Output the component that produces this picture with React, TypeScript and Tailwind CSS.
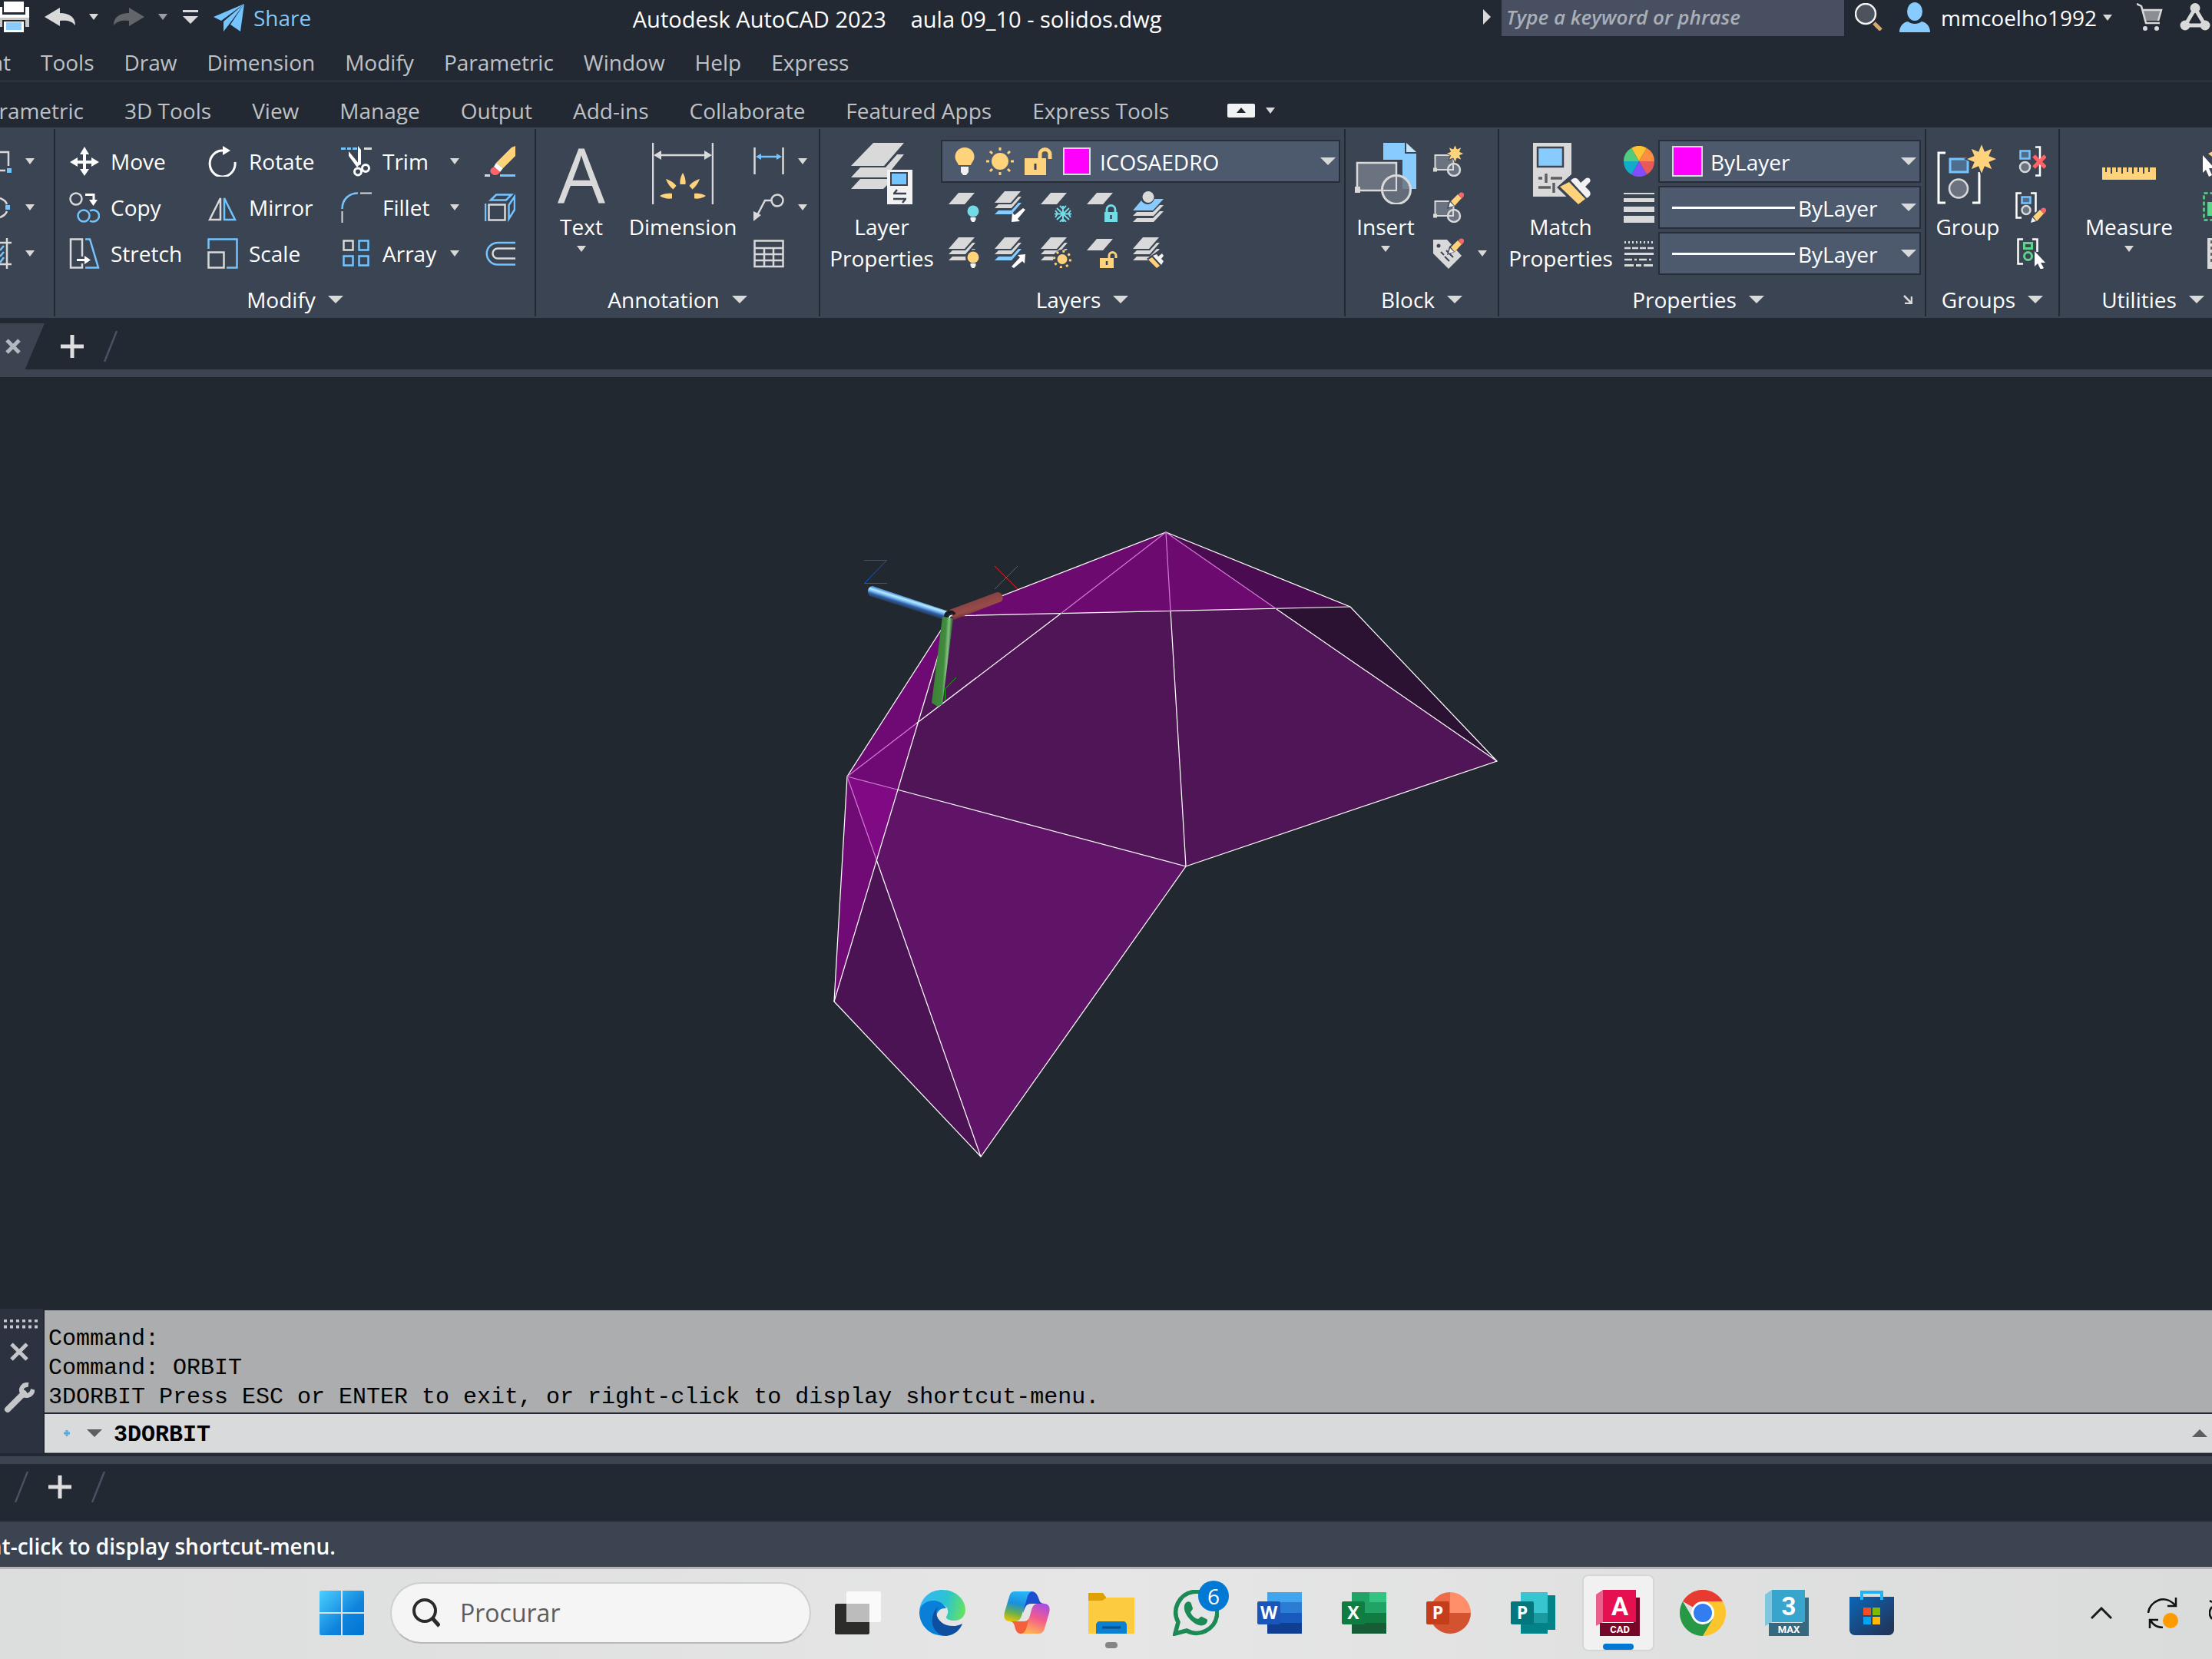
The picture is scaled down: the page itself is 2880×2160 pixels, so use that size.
import type { ReactNode } from "react";

const GRAY = "#d9d9d9";
const BLUE = "#74c5ff";
const YELLOW = "#ffd27c";
const CYAN = "#74dbe6";
const GREEN = "#5fd38a";

const menuItems = ["Tools", "Draw", "Dimension", "Modify", "Parametric", "Window", "Help", "Express"];

const ribbonTabs = [
   "3D Tools",
   "View",
   "Manage",
   "Output",
   "Add-ins",
   "Collaborate",
   "Featured Apps",
   "Express Tools",
];

interface CaretProps {
   big?: boolean;
   up?: boolean;
   color?: string;
}

function Caret({ big, up, color = GRAY }: CaretProps) {
   return (
      <svg
         className={big ? "w-5 h-2.5 shrink-0 pointer-events-none" : "w-3 h-2 shrink-0 pointer-events-none"}
         viewBox="0 0 20 10"
         preserveAspectRatio="none"
         aria-hidden="true"
      >
         <path d={up ? "M0 10L10 0L20 10Z" : "M0 0H20L10 10Z"} fill={color} />
      </svg>
   );
}

function Icon({ children }: { children: ReactNode }) {
   return (
      <svg className="w-10 h-10 shrink-0" viewBox="0 0 40 40" fill="none" aria-hidden="true">
         {children}
      </svg>
   );
}

function BigIcon({ children }: { children: ReactNode }) {
   return (
      <svg className="w-20 h-20 shrink-0" viewBox="0 0 80 80" fill="none" aria-hidden="true">
         {children}
      </svg>
   );
}

/* ---------- Modify icons ---------- */

const MoveIcon = () => (
   <Icon>
      <path d="M20 1l6 10h-4v8h7v-4l10 6-10 6v-4h-7v7h4l-6 9-6-9h4v-7h-7v4L1 21l10-6v4h7v-8h-4z" fill="#fff" />
   </Icon>
);

const RotateIcon = () => (
   <Icon>
      <path d="M36 21A16.500 17 0 1 1 20 6" stroke="#fff" strokeWidth="3" />
      <path d="M20 0l10 6-10 6z" fill="#fff" />
   </Icon>
);

const TrimIcon = () => (
   <Icon>
      <path d="M0 3.500h6M8 3.500h5M15 3.500h6" stroke={BLUE} strokeWidth="3" />
      <path d="M30 3.500h10" stroke={GRAY} strokeWidth="3" />
      <path d="M22 0l4 5v19l-4 2zM10 7l14 17-3 4L10 13z" fill="#fff" />
      <circle cx="22" cy="33.500" r="4.500" stroke="#fff" strokeWidth="3" />
      <circle cx="32" cy="29" r="4.500" stroke="#fff" strokeWidth="3" />
   </Icon>
);

const EraseIcon = () => (
   <Icon>
      <path d="M40 0v13L24 29l-9-7L35 2z" fill={YELLOW} />
      <path d="M15 22l9 7-4 5-8-7z" fill="#fff" />
      <path d="M12 27l8 7c-3 5-8 5-11 2s-2-6 3-9z" fill="#ff6468" />
      <path d="M0 38.500h7" stroke={GRAY} strokeWidth="3" />
      <path d="M20 38.500h20" stroke={BLUE} strokeWidth="3" />
   </Icon>
);

const CopyIcon = () => (
   <Icon>
      <circle cx="9" cy="9" r="7.500" stroke={GRAY} strokeWidth="2.500" />
      <path d="M21 3.500h11v9" stroke="#fff" strokeWidth="3" />
      <path d="M26 10h11l-5.500 8z" fill="#fff" />
      <circle cx="19" cy="31" r="7.500" stroke={BLUE} strokeWidth="2.500" />
      <path d="M27 24.500c6-3 12 1 12 6.500s-6 9.500-12 6.500" stroke={BLUE} strokeWidth="2.500" />
   </Icon>
);

const MirrorIcon = () => (
   <Icon>
      <path d="M17 8v28H3z" stroke={GRAY} strokeWidth="2.500" />
      <path d="M22 8v28h14z" stroke={BLUE} strokeWidth="2.500" />
   </Icon>
);

const FilletIcon = () => (
   <Icon>
      <path d="M1.500 22C1.500 10 10 1.500 22 1.500" stroke={BLUE} strokeWidth="2.500" />
      <path d="M25 1.500h15M1.500 25v15" stroke={GRAY} strokeWidth="2" />
   </Icon>
);

const ExplodeIcon = () => (
   <Icon>
      <path d="M5.500 16.500h21v20h-21z" stroke={GRAY} strokeWidth="2.500" />
      <path d="M1 15v23M8 10.500l7-7h20l-7 7zM31.500 17L39 6v17l-7.500 12z" stroke={BLUE} strokeWidth="2.500" />
   </Icon>
);

const StretchIcon = () => (
   <Icon>
      <path d="M17 24V1.500H2v37h15V33" stroke={GRAY} strokeWidth="2.500" />
      <path d="M21 1.500h6l11 37H21" stroke={BLUE} strokeWidth="2.500" />
      <path d="M10 27h10v-4l8 5.500-8 5.500v-4H10z" fill="#fff" />
   </Icon>
);

const ScaleIcon = () => (
   <Icon>
      <path d="M1.500 14V1.500h37v37H25" stroke={BLUE} strokeWidth="2.500" />
      <path d="M1.500 18.500h20v20h-20z" stroke={GRAY} strokeWidth="2.500" />
   </Icon>
);

const ArrayIcon = () => (
   <Icon>
      <path d="M3.500 3.500h12v12h-12z" stroke={GRAY} strokeWidth="2.500" />
      <path d="M23.500 3.500h12v12h-12zM3.500 23.500h12v12h-12zM23.500 23.500h12v12h-12z" stroke={BLUE} strokeWidth="2.500" />
   </Icon>
);

const OffsetIcon = () => (
   <Icon>
      <path d="M40 6H17a14 14 0 0 0 0 28.500h23" stroke={BLUE} strokeWidth="2.500" />
      <path d="M40 13.500H17a6.500 6.500 0 0 0 0 13h23" stroke={GRAY} strokeWidth="2.500" />
   </Icon>
);

/* ---------- Annotation icons ---------- */

const DimensionIcon = () => (
   <BigIcon>
      <path d="M1 0v80M79 0v80M8 16h64" stroke={GRAY} strokeWidth="2.500" />
      <path d="M2 16l10-6v12zM78 16l-10-6v12z" fill={GRAY} />
      <path
         d="M40 39c3 5 4 10 3.500 15h-7c-.5-5 .5-10 3.500-15zM18 47c6 2 11 5 13.500 9l-4 4.500c-4-3-7-7-9.500-13.500zM62 47c-6 2-11 5-13.500 9l4 4.500c4-3 7-7 9.500-13.500zM10 69c5-3 10-3.500 16-3v6.500c-6 .5-11 0-16-3.500zM70 69c-5-3-10-3.500-15-3v6.500c5 .5 10 0 15-3.500z"
         fill={YELLOW}
      />
   </BigIcon>
);

const LinearIcon = () => (
   <Icon>
      <path d="M1.500 2v35M38.500 2v35" stroke={GRAY} strokeWidth="2.500" />
      <path d="M6 14h28" stroke={BLUE} strokeWidth="2.500" />
      <path d="M3 14l7-4v8zM37 14l-7-4v8z" fill={BLUE} />
   </Icon>
);

const LeaderIcon = () => (
   <Icon>
      <circle cx="31" cy="11" r="7.500" stroke={GRAY} strokeWidth="2.500" />
      <path d="M23 11h-8L5 30" stroke={GRAY} strokeWidth="2.500" />
      <path d="M0 25l10 5L0 38z" fill={GRAY} />
   </Icon>
);

const TableIcon = () => (
   <Icon>
      <path
         d="M1.500 3.500h37v33.500h-37zM1.500 13h37M1.500 21h37M1.500 29h37M14 13v24M26 13v24"
         stroke={GRAY}
         strokeWidth="2.500"
      />
   </Icon>
);

/* ---------- Layer icons ---------- */

const LayerPropertiesIcon = () => (
   <BigIcon>
      <path d="M29 0h40L43 30H0zM12 32h33L60 15h9L47 42v3H0zM12 47h35v8l-5 5H0z" fill={GRAY} />
      <path d="M47 35h33v45H47z" fill="#f2f2f2" />
      <path d="M52 39h21v16H52z" fill={BLUE} stroke="#3b4453" strokeWidth="2" />
      <path d="M55 66h17M55 73h17M60 61l-4 5M67 78l4-5" stroke="#3b4453" strokeWidth="2.500" />
   </BigIcon>
);

const Sheet = () => <path d="M13 2h21L21 17H0z" fill={GRAY} />;

const Sheets = ({ lowBlue }: { lowBlue?: boolean }) => (
   <>
      <path d="M13 0h21L21 15H0zM5 17h17l9-10h4L22 22H0z" fill={GRAY} />
      <path d="M5 25h17l9-10h4L22 30H0z" fill={lowBlue ? "#88ccff" : GRAY} />
   </>
);

const SmallBulb = ({ color }: { color: string }) => (
   <>
      <circle cx="32" cy="26" r="10" fill="#3b4453" />
      <circle cx="32" cy="26" r="7.500" fill={color} />
      <path d="M28.500 34h7v3l-2 3h-3l-2-3z" fill="#f2f2f2" />
   </>
);

const Padlock = ({ color, open }: { color: string; open?: boolean }) => (
   <>
      <path d={open ? "M17 27h18v13H17z" : "M23 27h17v13H23z"} fill={color} />
      <path
         d={open ? "M29 28v-4a4.500 4.500 0 0 1 9 0v3" : "M26 28v-4a5.500 5.500 0 0 1 11 0v4"}
         stroke={color}
         strokeWidth="3"
      />
      <path d={open ? "M26 31v5" : "M31.500 31v5"} stroke="#3b4453" strokeWidth="2.500" />
   </>
);

const layerTools: { label: string; icon: ReactNode }[][] = [
   [
      { label: "Off", icon: <><Sheet /><SmallBulb color={CYAN} /></> },
      {
         label: "Isolate",
         icon: <><Sheets lowBlue /><path d="M37 22l3 2-10 12 3 3-11 1 1-12 3 3z" fill="#fff" /></>,
      },
      {
         label: "Freeze",
         icon: (
            <>
               <Sheet />
               <path
                  d="M29 19v21M18 29.500h22M21 22l16 15M37 22L21 37M25 19l4 4 4-4M25 40l4-4 4 4M19 25l3 4-3 5M39 25l-3 4 3 5"
                  stroke={CYAN}
                  strokeWidth="2"
               />
            </>
         ),
      },
      { label: "Lock", icon: <><Sheet /><Padlock color={CYAN} /></> },
      {
         label: "Make current",
         icon: (
            <>
               <path d="M11 12c4 7 14 7 17-2h12L26 25H0z" fill="#88ccff" />
               <circle cx="20" cy="7.500" r="7.500" fill={GRAY} />
               <path d="M5 27h21l9-9h5L27 32H0zM5 35h21l9-9h5L27 40H0z" fill={GRAY} />
            </>
         ),
      },
   ],
   [
      { label: "Turn all on", icon: <><Sheets /><SmallBulb color={YELLOW} /></> },
      {
         label: "Unisolate",
         icon: <><Sheets lowBlue /><path d="M22 38l11-12-3-3 10-1-1 12-3-3-11 9z" fill="#fff" /></>,
      },
      {
         label: "Thaw",
         icon: (
            <>
               <Sheets />
               <circle cx="28" cy="28" r="12" fill="#3b4453" />
               <circle cx="28" cy="28.500" r="6.500" fill={YELLOW} />
               <circle cx="28" cy="28.500" r="10.500" stroke={YELLOW} strokeWidth="3" strokeDasharray="3 5.250" />
            </>
         ),
      },
      { label: "Unlock", icon: <><Sheet /><Padlock color={YELLOW} open /></> },
      {
         label: "Match layer",
         icon: (
            <>
               <Sheets />
               <path d="M18 28l14-10 8 10v12H30z" fill="#3b4453" />
               <path d="M20 29l5-3 10 11-4 3z" fill={YELLOW} />
               <path d="M26 24l5-2 2 3 5-4 2 3-3 4 3 3-3 5z" fill="#f2f2f2" />
            </>
         ),
      },
   ],
];

const BulbIcon = () => (
   <svg className="w-7 h-9 shrink-0" viewBox="0 0 28 36" aria-hidden="true">
      <path d="M14 0c7 0 12.500 5 12.500 12 0 5-3 7-4.500 11H6c-1.500-4-4.500-6-4.500-11C1.500 5 7 0 14 0z" fill={YELLOW} />
      <path d="M9 25h10v7l-3 4h-4l-3-4z" fill="#f2f2f2" />
   </svg>
);

const SunIcon = () => (
   <svg className="w-9 h-9 shrink-0" viewBox="0 0 36 36" aria-hidden="true">
      <circle cx="18" cy="18" r="11" fill={YELLOW} />
      <path
         d="M18 0v4M18 32v4M0 18h4M32 18h4M5 5l3 3M28 28l3 3M5 31l3-3M28 8l3-3"
         stroke={YELLOW}
         strokeWidth="3"
      />
   </svg>
);

const UnlockIcon = () => (
   <svg className="w-9 h-9 shrink-0" viewBox="0 0 36 36" fill="none" aria-hidden="true">
      <path d="M0 14h28v22H0z" fill={YELLOW} />
      <path d="M20 15V9a6.500 6.500 0 0 1 13 0v6" stroke={YELLOW} strokeWidth="5" />
      <path d="M14 21v8" stroke="#3b4453" strokeWidth="3" />
   </svg>
);

/* ---------- Block icons ---------- */

const STAR = "M0-12l2.500 6 6-2.500-2.500 6 6 2.500-6 2.500 2.500 6-6-2.500L0 12l-2.500-6-6 2.500 2.500-6-6-2.500 6-2.500-2.500-6 6 2.500z";

const InsertIcon = () => (
   <BigIcon>
      <path d="M37 0h28v14h15v46H62V22H37z" fill="#88ccff" />
      <path d="M67 0l13 12H67z" fill="#c4e4fb" />
      <path d="M3 26h51v36H3z" fill="#6b7380" stroke={GRAY} strokeWidth="2.500" />
      <circle cx="54" cy="61" r="18.500" fill="#6b7380" fillOpacity=".85" stroke={GRAY} strokeWidth="3" />
      <path d="M54 43v19H36" stroke={GRAY} strokeWidth="2" />
      <path d="M0 57h7v8H0z" fill={GRAY} />
   </BigIcon>
);

const BlockShape = () => (
   <>
      <path d="M2.500 12h24v19h-24z" fill="#6b7380" stroke={GRAY} strokeWidth="2" />
      <circle cx="27" cy="31" r="8" fill="#6b7380" stroke={GRAY} strokeWidth="2.500" />
      <path d="M26 22v9h-8" stroke={GRAY} strokeWidth="2" />
      <path d="M0 28.500h5v5H0z" fill={GRAY} />
   </>
);

const Pencil = () => (
   <>
      <path d="M18 22l3-11L34 0l6 6-12 12z" fill="#3b4453" />
      <path d="M20 20l2-7 5 5z" fill="#f2f2f2" />
      <path d="M23 12l9-9 5 5-9 10z" fill={YELLOW} />
      <path d="M33 3c2-4 8-3 7 2l-3 4z" fill="#ff6468" />
   </>
);

const CreateBlockIcon = () => (
   <Icon>
      <BlockShape />
      <path d={STAR} transform="translate(28.500 10)" fill={YELLOW} stroke="#3b4453" strokeWidth="1" />
   </Icon>
);

const EditBlockIcon = () => (
   <Icon>
      <BlockShape />
      <Pencil />
   </Icon>
);

const EditAttributeIcon = () => (
   <Icon>
      <path d="M0 2h18l19 21-17 17L0 20z" fill={GRAY} />
      <circle cx="7" cy="10" r="2.500" fill="#3b4453" />
      <path d="M10 18l4 4M15 24l6 6M17 16l9 9" stroke="#3b4453" strokeWidth="2" />
      <Pencil />
   </Icon>
);

/* ---------- Properties icons ---------- */

const MatchIcon = () => (
   <BigIcon>
      <path d="M4 0h50v70H4z" fill={GRAY} />
      <path d="M10 6h33v25H10z" fill="#88ccff" stroke="#3b4453" strokeWidth="2.500" />
      <path d="M11 46h5M27 46h15M21 40v12M11 58h16M31 52v13" stroke="#5c5f64" strokeWidth="3.500" />
      <path d="M35 58l19-17 28 16-20 27z" fill="#3b4453" />
      <path d="M39 57l12-6 21 22-9 7z" fill={YELLOW} />
      <path d="M53 49c4-4 7-4 10-1l3 4 7-6c4-2 7 2 5 5l-6 6 5 5c3 4 2 7-3 10z" fill="#f2f2f2" />
   </BigIcon>
);

const ColorWheelIcon = () => (
   <Icon>
      <path d="M20 20L10 2.700a20 20 0 0 1 20 0z" fill="#ffc233" />
      <path d="M20 20L30 2.700A20 20 0 0 1 40 20z" fill="#ff8f40" />
      <path d="M20 20h20a20 20 0 0 1-10 17.300z" fill="#e85a5a" />
      <path d="M20 20l10 17.300a20 20 0 0 1-20 0z" fill="#834dff" />
      <path d="M20 20L10 37.300A20 20 0 0 1 0 20z" fill="#12accb" />
      <path d="M20 20H0A20 20 0 0 1 10 2.700z" fill="#4fcc80" />
   </Icon>
);

const LineweightIcon = () => (
   <Icon>
      <path d="M0 1h40v2H0zM0 8h40v5H0zM0 19h40v7H0zM0 31h40v9H0z" fill={GRAY} />
   </Icon>
);

const LinetypeIcon = () => (
   <Icon>
      <path d="M1 5.500h38" stroke={GRAY} strokeWidth="3" strokeDasharray="2 3" />
      <path d="M1 13h38" stroke={GRAY} strokeWidth="2.500" strokeDasharray="8 2" />
      <path d="M1 20.500h38" stroke={GRAY} strokeWidth="3" />
      <path d="M1 28h38" stroke={GRAY} strokeWidth="2.500" strokeDasharray="10 3 3 3" />
      <path d="M1 35.500h38" stroke={GRAY} strokeWidth="3" strokeDasharray="12 3 7 3" />
   </Icon>
);

/* ---------- Groups and Utilities icons ---------- */

const GroupIcon = () => (
   <BigIcon>
      <path d="M11 13H2v65h9M46 78h9V38" stroke="#fff" strokeWidth="3" />
      <path d="M17 21h23v17H17z" fill="#4f6d8c" stroke={BLUE} strokeWidth="3" />
      <circle cx="28" cy="59.500" r="12" fill="#6b7380" stroke={GRAY} strokeWidth="2.500" />
      <path d={STAR} transform="translate(58 21) scale(1.750)" fill={YELLOW} stroke="#3b4453" strokeWidth="1" />
   </BigIcon>
);

const UngroupIcon = () => (
   <Icon>
      <path d="M26 1.500h6v37h-6" stroke="#fff" strokeWidth="2.500" />
      <path d="M6.500 6.500h12v10h-12z" fill="#4f6d8c" stroke={BLUE} strokeWidth="2.500" />
      <circle cx="12.500" cy="27.500" r="6.500" fill="#6b7380" stroke={GRAY} strokeWidth="2.500" />
      <path d="M24 13l15 15M39 13L24 28" stroke="#ff6468" strokeWidth="5" />
   </Icon>
);

const GroupEditIcon = () => (
   <Icon>
      <path d="M8 1.500H1.500v32H8M20 1.500h6.500v25" stroke="#fff" strokeWidth="2.500" />
      <path d="M8.500 6.500h11v8h-11z" fill="#4f6d8c" stroke={BLUE} strokeWidth="2.500" />
      <circle cx="14" cy="23.500" r="5.500" fill="#6b7380" stroke={GRAY} strokeWidth="2.500" />
      <g transform="translate(0 20)">
         <Pencil />
      </g>
   </Icon>
);

const GroupSelectIcon = () => (
   <Icon>
      <path d="M10 1.500H3.500v32H10M22 1.500h6.500V18" stroke="#fff" strokeWidth="2.500" />
      <path d="M11.500 6.500h10v7h-10z" stroke={GREEN} strokeWidth="3" />
      <circle cx="16.500" cy="23.500" r="5" stroke={GREEN} strokeWidth="3" />
      <path d="M25 17l14 15h-6l4 7-4 2-4-8-4 4z" fill="#fff" />
   </Icon>
);

const RulerIcon = () => (
   <BigIcon>
      <path
         d="M5 32h4v6h2v-6h5v8h2v-8h5v6h2v-6h5v8h2v-8h5v6h2v-6h5v8h2v-8h5v6h2v-6h5v8h2v-8h5v6h2v-6h8v16H5z"
         fill={YELLOW}
      />
   </BigIcon>
);

/* ---------- Ribbon building blocks ---------- */

interface PanelProps {
   title: string;
   className: string;
   launcher?: boolean;
   children: ReactNode;
}

function Panel({ title, className, launcher, children }: PanelProps) {
   return (
      <section className={`flex flex-col shrink-0 my-0.5 border-l-2 border-[#222933] ${className}`}>
         <div className="flex h-[200px] items-start">{children}</div>
         <div className="flex items-center h-11">
            <button type="button" className="flex flex-1 justify-center items-center gap-4">
               {title}
               <Caret big />
            </button>
            {launcher && (
               <button type="button" className="pr-4 pl-2" aria-label={`${title} settings`}>
                  <svg className="w-3 h-3" viewBox="0 0 12 12" fill="none" aria-hidden="true">
                     <path d="M1 1l9 9M11 2v9H2" stroke={GRAY} strokeWidth="2.500" />
                  </svg>
               </button>
            )}
         </div>
      </section>
   );
}

interface BigButtonProps {
   icon: ReactNode;
   lines: string[];
   className: string;
   caret?: boolean;
}

function BigButton({ icon, lines, className, caret }: BigButtonProps) {
   return (
      <button type="button" className={`flex flex-col shrink-0 items-center pt-[18px] ${className}`}>
         {icon}
         <span className="mt-[9px] leading-[41px]">
            {lines.map((line) => (
               <span key={line} className="block">
                  {line}
               </span>
            ))}
         </span>
         {caret && (
            <span className="flex pt-1">
               <Caret />
            </span>
         )}
      </button>
   );
}

interface ToolProps {
   icon: ReactNode;
   label: string;
   hideLabel?: boolean;
   caret?: boolean;
}

function Tool({ icon, label, hideLabel, caret }: ToolProps) {
   return (
      <div className="flex items-center h-[60px]">
         <button type="button" className="flex items-center gap-3.5" aria-label={label}>
            {icon}
            {!hideLabel && label}
         </button>
         {caret && (
            <button type="button" className="ml-auto p-1" aria-label={`${label} options`}>
               <Caret />
            </button>
         )}
      </div>
   );
}

interface ComboProps {
   label: string;
   value: string;
   className: string;
   children?: ReactNode;
}

function Combo({ label, value, className, children }: ComboProps) {
   return (
      <div className={`flex items-center h-14 border-2 border-[#272e39] bg-[#4d596d] pr-1 ${className}`}>
         {children}
         <select
            aria-label={label}
            defaultValue={value}
            className="flex-1 pt-0.5 min-w-0 h-full bg-transparent outline-none appearance-none"
         >
            <option>{value}</option>
         </select>
         <Caret big />
      </div>
   );
}

function Swatch({ className }: { className: string }) {
   return <span className={`shrink-0 border-2 border-[#d9d9d9] bg-[#ff00ff] ${className}`} />;
}

function TitleBar() {
   return (
      <header className="flex items-start h-14 overflow-hidden text-white">
         <div className="flex items-center h-11 shrink-0">
            <button type="button" aria-label="Plot">
               <svg className="w-[38px] h-10" viewBox="0 0 38 40" aria-hidden="true">
                  <path d="M5 0h26v14H5z" fill="#fff" />
                  <path d="M0 7h3v10h30V7h5v14H0z" fill="#fff" />
                  <path d="M0 21h38v12h-5v-9H3v9H0z" fill="#c9c9c9" />
                  <path d="M5 26h26v14H5z" fill="#fff" />
                  <path d="M8 27h20v10H8z" fill="#88ccff" />
               </svg>
            </button>
            <button type="button" className="ml-5" aria-label="Undo">
               <svg className="w-10 h-6" viewBox="0 0 40 24" aria-hidden="true">
                  <path d="M0 12L20 0v7c12 0 20 5 20 16-5-6-11-7-20-6v7z" fill={GRAY} />
               </svg>
            </button>
            <button type="button" className="ml-[18px]" aria-label="Undo history">
               <Caret />
            </button>
            <button type="button" className="ml-5" aria-label="Redo">
               <svg className="w-10 h-6" viewBox="0 0 40 24" aria-hidden="true">
                  <path d="M40 12L20 0v7C8 7 0 12 0 23c5-6 11-7 20-6v7z" fill="#62666b" />
               </svg>
            </button>
            <button type="button" className="ml-[18px]" aria-label="Redo history">
               <Caret color="#9a9da1" />
            </button>
            <button type="button" className="ml-5" aria-label="Customize toolbar">
               <svg className="w-5 h-[18px]" viewBox="0 0 20 18" aria-hidden="true">
                  <path d="M0 0h20v3H0zM0 8h20L10 18z" fill={GRAY} />
               </svg>
            </button>
         </div>
         <button type="button" className="flex items-center gap-3 ml-5 h-[46px] text-[#7fc8fb] shrink-0">
            <svg className="w-10 h-9" viewBox="0 0 40 36" aria-hidden="true">
               <path d="M40 0L0 17l10 5zM40 0L13 23v13l7-9zM40 0L22 27l13 9z" fill={BLUE} />
            </svg>
            <span className="leading-[48px]">Share</span>
         </button>
         <h1 className="flex flex-1 justify-center gap-8 text-[29px] leading-[50px] whitespace-nowrap">
            <span>Autodesk AutoCAD 2023</span>
            <span>aula 09_10 - solidos.dwg</span>
         </h1>
         <div className="flex items-start shrink-0">
            <svg className="mt-3 mr-3.5 w-2.5 h-5" viewBox="0 0 10 20" aria-hidden="true">
               <path d="M0 0l10 10L0 20z" fill={GRAY} />
            </svg>
            <input
               type="text"
               aria-label="Search help"
               placeholder="Type a keyword or phrase"
               className="bg-[#474f61] px-1.5 pb-1 w-[446px] h-[47px] font-semibold text-[26px] placeholder:text-[#a9aeb7] italic outline-none"
            />
            <button type="button" className="mt-1 ml-3.5" aria-label="Search">
               <svg className="w-9 h-9" viewBox="0 0 36 36" aria-hidden="true">
                  <path d="M25 26l9 9" stroke="#d8a768" strokeWidth="5" />
                  <circle cx="14" cy="14" r="13" fill="#4c535c" stroke="#f2f2f2" strokeWidth="2.500" />
               </svg>
            </button>
            <button type="button" className="flex items-center gap-3.5 ml-[22px] h-[46px]">
               <svg className="w-10 h-10" viewBox="0 0 40 40" aria-hidden="true">
                  <ellipse cx="20" cy="12" rx="10" ry="12" fill="#88ccff" />
                  <path d="M0 39c0-9 6-13 11-14 5 4 13 4 18 0 5 1 11 5 11 14z" fill="#88ccff" />
               </svg>
               <span className="leading-[48px]">mmcoelho1992</span>
               <span className="-ml-1.5">
                  <Caret />
               </span>
            </button>
            <button type="button" className="mt-1 ml-8" aria-label="App store">
               <svg className="w-[34px] h-9" viewBox="0 0 34 36" fill="none" aria-hidden="true">
                  <path d="M8 9h24l-4 14H12z" fill="#8b8f94" />
                  <path d="M0 1l6 3 6 22h18M8 9h24l-4 14" stroke={GRAY} strokeWidth="2.500" />
                  <circle cx="11" cy="33" r="3" fill={GRAY} />
                  <circle cx="26" cy="33" r="3" fill={GRAY} />
               </svg>
            </button>
            <button type="button" className="mt-1 mr-0.5 ml-[22px]" aria-label="Autodesk App">
               <svg className="w-10 h-9" viewBox="0 0 40 36" fill="none" aria-hidden="true">
                  <path d="M20 7L7 29h26z" stroke={GRAY} strokeWidth="5" />
                  <circle cx="20" cy="6.500" r="6.500" fill={GRAY} />
                  <circle cx="7" cy="29" r="6.500" fill={GRAY} />
                  <circle cx="33" cy="29" r="6.500" fill={GRAY} />
               </svg>
            </button>
         </div>
      </header>
   );
}

function Ribbon() {
   return (
      <div className="flex bg-[#3b4453] h-[248px] overflow-hidden text-white whitespace-nowrap">
         <section className="shrink-0 pt-3.5 pr-[21px] w-[70px]">
            <Tool
               hideLabel
               caret
               label="Rectangle"
               icon={
                  <svg className="w-4 h-10" viewBox="0 0 16 40" aria-hidden="true">
                     <path d="M0 8h11v18M0 32h7" stroke={GRAY} strokeWidth="2.500" fill="none" />
                     <path d="M9 29h6v6H9z" fill={BLUE} />
                  </svg>
               }
            />
            <Tool
               hideLabel
               caret
               label="Ellipse"
               icon={
                  <svg className="w-4 h-10" viewBox="0 0 16 40" aria-hidden="true">
                     <path d="M0 8c5 2 8 5 9 8M9 25c-1 3-4 6-9 8" stroke={GRAY} strokeWidth="2.500" fill="none" />
                     <path d="M7 17h6v6H7z" fill={BLUE} />
                  </svg>
               }
            />
            <Tool
               hideLabel
               caret
               label="Hatch"
               icon={
                  <svg className="w-4 h-10" viewBox="0 0 16 40" aria-hidden="true">
                     <path d="M0 16l5-6M0 24l5-6M0 32l5-7" stroke={BLUE} strokeWidth="2.500" />
                     <path d="M0 6h15M0 34h15M9 0v40" stroke={GRAY} strokeWidth="2.500" />
                  </svg>
               }
            />
         </section>

         <Panel title="Modify" className="w-[626px]">
            <div className="grid grid-cols-[180px_174px_158px_69px] pt-3 pl-[18px]">
               <Tool icon={<MoveIcon />} label="Move" />
               <Tool icon={<RotateIcon />} label="Rotate" />
               <Tool icon={<TrimIcon />} label="Trim" caret />
               <div className="pl-[29px]"><Tool icon={<EraseIcon />} label="Erase" hideLabel /></div>
               <Tool icon={<CopyIcon />} label="Copy" />
               <Tool icon={<MirrorIcon />} label="Mirror" />
               <Tool icon={<FilletIcon />} label="Fillet" caret />
               <div className="pl-[29px]"><Tool icon={<ExplodeIcon />} label="Explode" hideLabel /></div>
               <Tool icon={<StretchIcon />} label="Stretch" />
               <Tool icon={<ScaleIcon />} label="Scale" />
               <Tool icon={<ArrayIcon />} label="Array" caret />
               <div className="pl-[29px]"><Tool icon={<OffsetIcon />} label="Offset" hideLabel /></div>
            </div>
         </Panel>

         <Panel title="Annotation" className="w-[370px]">
            <BigButton
               className="ml-[13px] w-[92px]"
               icon={<span className="h-20 text-[#d9d9d9] text-[98px] leading-20">A</span>}
               lines={["Text"]}
               caret
            />
            <BigButton className="w-[172px]" icon={<DimensionIcon />} lines={["Dimension"]} />
            <div className="pt-3 pl-1.5 w-20">
               <Tool icon={<LinearIcon />} label="Linear" hideLabel caret />
               <Tool icon={<LeaderIcon />} label="Leader" hideLabel caret />
               <Tool icon={<TableIcon />} label="Table" hideLabel />
            </div>
         </Panel>

         <Panel title="Layers" className="w-[684px]">
            <BigButton
               className="ml-1 w-[152px]"
               icon={<LayerPropertiesIcon />}
               lines={["Layer", "Properties"]}
            />
            <div className="pt-3.5 pl-px">
               <Combo label="Layer" value="ICOSAEDRO" className="w-[520px]">
                  <span className="flex items-center gap-3.5 pr-3 pl-[15px]">
                     <BulbIcon />
                     <SunIcon />
                     <UnlockIcon />
                     <Swatch className="w-9 h-9" />
                  </span>
               </Combo>
               {layerTools.map((row, i) => (
                  <div key={i} className={i === 0 ? "flex gap-5 pt-[11px] pl-2.5" : "flex gap-5 pt-5 pl-2.5"}>
                     {row.map((tool) => (
                        <button key={tool.label} type="button" aria-label={tool.label}>
                           <Icon>{tool.icon}</Icon>
                        </button>
                     ))}
                  </div>
               ))}
            </div>
         </Panel>

         <Panel title="Block" className="w-[200px]">
            <BigButton className="w-[104px]" icon={<InsertIcon />} lines={["Insert"]} caret />
            <div className="pt-3 pl-2.5 w-[84px]">
               <Tool icon={<CreateBlockIcon />} label="Create block" hideLabel />
               <Tool icon={<EditBlockIcon />} label="Edit block" hideLabel />
               <Tool icon={<EditAttributeIcon />} label="Edit attribute" hideLabel caret />
            </div>
         </Panel>

         <Panel title="Properties" className="w-[556px]" launcher>
            <BigButton className="w-40" icon={<MatchIcon />} lines={["Match", "Properties"]} />
            <div className="pt-3 pl-0.5">
               <div className="flex items-center gap-[5px] h-[60px]">
                  <ColorWheelIcon />
                  <Combo label="Object color" value="ByLayer" className="w-[342px]">
                     <Swatch className="mr-2.5 ml-4 w-10 h-10" />
                  </Combo>
               </div>
               <div className="flex items-center gap-[5px] h-[60px]">
                  <LineweightIcon />
                  <Combo label="Lineweight" value="ByLayer" className="w-[342px]">
                     <span className="mr-1 ml-4 bg-white w-40 h-[3px] shrink-0" />
                  </Combo>
               </div>
               <div className="flex items-center gap-[5px] h-[60px]">
                  <LinetypeIcon />
                  <Combo label="Linetype" value="ByLayer" className="w-[342px]">
                     <span className="mr-1 ml-4 bg-white w-40 h-[3px] shrink-0" />
                  </Combo>
               </div>
            </div>
         </Panel>

         <Panel title="Groups" className="w-[174px]">
            <BigButton className="w-[108px]" icon={<GroupIcon />} lines={["Group"]} />
            <div className="pt-3 pl-2">
               <Tool icon={<UngroupIcon />} label="Ungroup" hideLabel />
               <Tool icon={<GroupEditIcon />} label="Group edit" hideLabel />
               <Tool icon={<GroupSelectIcon />} label="Group selection" hideLabel />
            </div>
         </Panel>

         <Panel title="Utilities" className="w-[244px]">
            <BigButton className="w-[180px]" icon={<RulerIcon />} lines={["Measure"]} caret />
            <div className="pt-3 pl-1.5">
               <Tool
                  hideLabel
                  label="Quick select"
                  icon={
                     <Icon>
                        <path d="M7 10l8-4v10z" fill={YELLOW} />
                        <path d="M0 12l15 17h-7l4 9-4 2-4-9-4 4z" fill="#fff" />
                     </Icon>
                  }
               />
               <Tool
                  hideLabel
                  label="Select all"
                  icon={
                     <Icon>
                        <path d="M1.500 1.500h37v35h-37z" stroke={GREEN} strokeWidth="2.500" strokeDasharray="5 3" />
                        <path d="M6 13h20v18H6z" fill={GREEN} />
                     </Icon>
                  }
               />
               <Tool
                  hideLabel
                  label="Quick calculator"
                  icon={
                     <Icon>
                        <path d="M6 0h30v40H6z" fill={GRAY} />
                        <path d="M10 5h22M10 13h22M10 21h22M10 29h22" stroke="#5c5f64" strokeWidth="4" />
                     </Icon>
                  }
               />
            </div>
         </Panel>
      </div>
   );
}

function Plus() {
   return (
      <svg className="w-[30px] h-[30px]" viewBox="0 0 30 30" aria-hidden="true">
         <path d="M15 0v30M0 15h30" stroke="#dedede" strokeWidth="5" />
      </svg>
   );
}

function Slash() {
   return (
      <svg className="w-[18px] h-10 shrink-0" viewBox="0 0 18 40" aria-hidden="true">
         <path d="M17 0L1 40" stroke="#4a5363" strokeWidth="2.500" />
      </svg>
   );
}

function FileTabs() {
   return (
      <div className="flex items-end border-[#3c4452] border-b-[10px] h-[77px]">
         <div className="flex items-center bg-[#3c4452] w-[58px] h-[60px] [clip-path:polygon(0_0,100%_0,56%_100%,0_100%)]">
            <button type="button" className="ml-[7px]" aria-label="Close drawing">
               <svg className="w-5 h-5" viewBox="0 0 20 20" aria-hidden="true">
                  <path d="M2 2l16 16M18 2L2 18" stroke="#b4b8c0" strokeWidth="5" />
               </svg>
            </button>
         </div>
         <button type="button" className="mb-[15px] ml-[21px]" aria-label="New drawing">
            <Plus />
         </button>
         <div className="mb-2.5 ml-[26px]">
            <Slash />
         </div>
      </div>
   );
}

function Viewport() {
   return (
      <main className="flex-1 bg-[#212830] min-h-0">
         <svg className="block w-full h-full" viewBox="0 491 2880 1213" fill="none" role="img" aria-label="Solid model">
            <defs>
               <linearGradient id="axisZ" x1="1187" y1="776" x2="1182" y2="792" gradientUnits="userSpaceOnUse">
                  <stop offset="0" stopColor="#3a6fae" />
                  <stop offset=".25" stopColor="#5a9fe0" />
                  <stop offset=".4" stopColor="#b8ecff" />
                  <stop offset=".55" stopColor="#7dbdf0" />
                  <stop offset=".75" stopColor="#2e5fa8" />
                  <stop offset="1" stopColor="#28384f" />
               </linearGradient>
               <linearGradient id="axisX" x1="1266" y1="781" x2="1271" y2="798" gradientUnits="userSpaceOnUse">
                  <stop offset="0" stopColor="#864242" />
                  <stop offset=".7" stopColor="#984c4a" />
                  <stop offset="1" stopColor="#6f3636" />
               </linearGradient>
               <linearGradient id="axisY" x1="1220" y1="860" x2="1236" y2="861" gradientUnits="userSpaceOnUse">
                  <stop offset="0" stopColor="#3b8438" />
                  <stop offset=".55" stopColor="#418b3e" />
                  <stop offset=".8" stopColor="#86c184" />
                  <stop offset="1" stopColor="#38783a" />
               </linearGradient>
            </defs>

            <path d="M1237 802L1518 693L1758 790L1949 991L1544 1128L1277 1506L1086 1304L1103 1011Z" fill="#4f1556" />
            <path d="M1237 802L1518 693L1662 793Z" fill="#6c0a70" />
            <path d="M1518 693L1758 790L1662 793Z" fill="#4b0b50" />
            <path d="M1758 790L1949 991L1662 793Z" fill="#2b1233" />
            <path d="M1168 1028L1544 1128L1277 1506L1141 1119Z" fill="#5f1467" />
            <path d="M1141 1119L1277 1506L1086 1304Z" fill="#4b1254" />
            <path d="M1237 802L1103 1011L1168 1028Z" fill="#6f0a74" />
            <path d="M1103 1011L1168 1028L1141 1119Z" fill="#800a84" />
            <path d="M1103 1011L1141 1119L1086 1304Z" fill="#700a75" />

            <g stroke="#fff" strokeWidth="1.250">
               <path d="M1237 802L1518 693L1758 790L1949 991L1544 1128L1277 1506L1086 1304L1103 1011Z" />
               <path d="M1237 802L1758 790M1237 802L1086 1304" />
               <path d="M1381 799L1193 942M1524 795L1544 1128M1662 793L1949 991M1168 1028L1544 1128M1141 1119L1277 1506" />
            </g>
            <g stroke="#d07ad2" strokeWidth="1.250">
               <path d="M1518 693L1381 799M1518 693L1524 795M1518 693L1662 793" />
               <path d="M1103 1011L1193 942M1103 1011L1168 1028M1103 1011L1141 1119" />
            </g>

            <path d="M1236 794L1298 771C1304 770 1308 778 1304 783L1242 807Z" fill="url(#axisX)" />
            <path d="M1136 763L1235 796L1229 807L1132 776C1128 770 1130 764 1136 763Z" fill="url(#axisZ)" />
            <path d="M1227 803L1241 805L1227 917L1221 920L1213 915Z" fill="url(#axisY)" />
            <path d="M1231 803c0-6 8-9 12-3" stroke="#171d24" strokeWidth="4" />
            <path d="M1125 729.500H1154.500L1125.500 759.500H1155" stroke="#1458d8" />
            <path d="M1295 737L1325 767M1325 737L1295 767" stroke="#e02828" />
            <path d="M1245 882L1230.500 897V912" stroke="#0cb80c" />
         </svg>
      </main>
   );
}

function CommandLine() {
   return (
      <section className="flex bg-[#222933] pb-1 h-48 font-['Liberation_Mono',monospace] text-[30px] text-black">
         <div className="flex flex-col items-center bg-[#2c3240] pr-1.5 w-14 shrink-0">
            <svg className="mt-3.5 ml-1 w-11 h-3" viewBox="0 0 44 12" aria-hidden="true">
               <path d="M0 1.500h44M0 9.500h44" stroke="#c4c6c9" strokeWidth="4" strokeDasharray="4 4" />
            </svg>
            <button type="button" className="mt-[18px]" aria-label="Close command line">
               <svg className="w-6 h-6" viewBox="0 0 24 24" aria-hidden="true">
                  <path d="M2 2l20 20M22 2L2 22" stroke="#c4c6c9" strokeWidth="5" />
               </svg>
            </button>
            <button type="button" className="mt-7" aria-label="Customize">
               <svg className="w-10 h-10" viewBox="0 0 40 40" fill="none" aria-hidden="true">
                  <path d="M5 35L26 14" stroke="#c4c6c9" strokeWidth="8" strokeLinecap="round" />
                  <path d="M32 3c-7-1-11 5-8 11 3 5 12 4 14-5" stroke="#c4c6c9" strokeWidth="6" />
               </svg>
            </button>
         </div>
         <div className="flex flex-col flex-1 pt-0.5 pl-0.5 min-w-0">
            <div className="bg-[#acadaf] pt-[18px] pl-[5px] h-[134px] leading-[38px] whitespace-pre">
               <p>Command:</p>
               <p>Command: ORBIT</p>
               <p>3DORBIT Press ESC or ENTER to exit, or right-click to display shortcut-menu.</p>
            </div>
            <div className="flex items-center bg-[#d9dadc] mt-0.5 pr-1.5 pl-[25px] border-[#8c9093] border-b h-[51px]">
               <svg className="w-2 h-2 shrink-0" viewBox="0 0 8 8" aria-hidden="true">
                  <path d="M4 0v8M0 4h8" stroke="#5aa9e2" strokeWidth="3" />
               </svg>
               <span className="flex mr-[15px] ml-[22px]">
                  <Caret big color="#5c5e60" />
               </span>
               <input
                  type="text"
                  aria-label="Command"
                  defaultValue="3DORBIT"
                  className="flex-1 bg-transparent pt-1 min-w-0 font-bold outline-none"
               />
               <Caret big up color="#5c5e60" />
            </div>
         </div>
      </section>
   );
}

/* ---------- Taskbar ---------- */

function AppIcon({ children }: { children: ReactNode }) {
   return (
      <svg className="w-[60px] h-[60px]" viewBox="0 0 60 60" fill="none" aria-hidden="true">
         {children}
      </svg>
   );
}

function OfficeBadge({ letter, color }: { letter: string; color: string }) {
   return (
      <>
         <rect x="0" y="15" width="30" height="30" rx="2" fill={color} />
         <text
            x="15"
            y="38"
            textAnchor="middle"
            fill="#fff"
            className="font-['Open_Sans',sans-serif] font-bold text-[23px]"
         >
            {letter}
         </text>
      </>
   );
}

const apps: { name: string; icon: ReactNode; active?: boolean; running?: boolean; badge?: string }[] = [
   {
      name: "Task view",
      icon: (
         <AppIcon>
            <rect x="0" y="18" width="45" height="40" rx="2" fill="#2c2c2b" />
            <rect x="15" y="2" width="45" height="40" rx="2" fill="#fafafa" />
            <path d="M15 18h30v24H15z" fill="#bcbcbc" />
         </AppIcon>
      ),
   },
   {
      name: "Edge",
      icon: (
         <AppIcon>
            <defs>
               <linearGradient id="edgeTop" x1="0" y1="15" x2="60" y2="30" gradientUnits="userSpaceOnUse">
                  <stop offset="0" stopColor="#35b6f8" />
                  <stop offset=".55" stopColor="#2cc4cf" />
                  <stop offset="1" stopColor="#6ae45a" />
               </linearGradient>
            </defs>
            <path d="M0 27C2 10 14 0 30 0c18 0 30 13 30 26 0 9-7 14-14 14-6 0-12-2-11-5 4-6 3-13-5-16C18 12 4 16 0 27z" fill="url(#edgeTop)" />
            <path d="M0 29c1-15 22-20 32-9 2 2 3 4 3 4-9-1-13 6-13 12 0 14 12 22 16 23-20 4-38-10-38-30z" fill="#0a7fd8" />
            <path d="M18 32c-5 15 5 28 17 28 11-1 18-8 21-16-13 7-32 2-34-14 0-4 1-6 3-8-4 2-6 6-7 10z" fill="#0f4f9f" />
         </AppIcon>
      ),
   },
   {
      name: "Copilot",
      icon: (
         <AppIcon>
            <defs>
               <linearGradient id="copA" x1="20" y1="2" x2="10" y2="42" gradientUnits="userSpaceOnUse">
                  <stop offset="0" stopColor="#28b4f4" />
                  <stop offset=".4" stopColor="#1a90dc" />
                  <stop offset=".7" stopColor="#6ab04c" />
                  <stop offset="1" stopColor="#f2c500" />
               </linearGradient>
               <linearGradient id="copB" x1="52" y1="18" x2="38" y2="57" gradientUnits="userSpaceOnUse">
                  <stop offset="0" stopColor="#a54ee4" />
                  <stop offset=".5" stopColor="#f25b8e" />
                  <stop offset="1" stopColor="#ffb055" />
               </linearGradient>
            </defs>
            <path d="M36 2c6 0 8 5 10 11 1 4 4 5 8 5H36c-8 0-8 5-11 12l2-22c1-4 4-6 9-6z" fill="#1b4fd0" />
            <path d="M22 57c-5 0-7-5-8-10-1-4-3-6-7-6h18c8 0 8-5 11-11l-6 21c-2 4-4 6-8 6z" fill="#f4603c" />
            <path d="M14 2h23c-5 1-6 6-8 13l-6 19c-2 5-4 7-9 7H8c-6 0-9-4-7-12L7 9c1-4 3-7 7-7z" fill="url(#copA)" />
            <path d="M46 57H23c5-1 6-6 8-13l5-18c2-6 4-8 9-8h7c6 0 9 4 7 12l-6 20c-1 4-3 7-7 7z" fill="url(#copB)" />
         </AppIcon>
      ),
   },
   {
      name: "File Explorer",
      running: true,
      icon: (
         <AppIcon>
            <path d="M0 4h19l5 7v5H0z" fill="#dfa000" />
            <path d="M0 14h18l6-4h36v47H0z" fill="#fdcb40" />
            <path d="M10 57V46c0-3 2-5 5-5h30c3 0 5 2 5 5v11z" fill="#0b7fd2" />
            <path d="M18 49h24" stroke="#0a4f8c" strokeWidth="3" />
         </AppIcon>
      ),
   },
   {
      name: "WhatsApp",
      badge: "6",
      icon: (
         <AppIcon>
            <path d="M3 57l4-15A27 27 0 1 1 18 53z" stroke="#1c8a55" strokeWidth="5.500" />
            <path
               d="M16 18c3-4 7-3 8 0l2 6c0 2-2 3-3 5 2 5 6 8 10 9 2-1 3-4 5-3l6 3c2 1 1 5-2 7-6 4-14-1-20-7s-9-15-6-20z"
               fill="#1c8a55"
            />
         </AppIcon>
      ),
   },
   {
      name: "Word",
      icon: (
         <AppIcon>
            <path d="M13 3h45v14H13z" fill="#41a5ee" />
            <path d="M13 16h45v14H13z" fill="#2b7cd3" />
            <path d="M13 30h45v14H13z" fill="#185abd" />
            <path d="M13 43h45v14H13z" fill="#103f91" />
            <OfficeBadge letter="W" color="#1c55b8" />
         </AppIcon>
      ),
   },
   {
      name: "Excel",
      icon: (
         <AppIcon>
            <path d="M13 3h23v27H13z" fill="#21a366" />
            <path d="M36 3h22v13H36z" fill="#33c481" />
            <path d="M36 16h22v14H36z" fill="#21a366" />
            <path d="M13 30h45v14H13z" fill="#107c41" />
            <path d="M13 43h45v14H13z" fill="#185c37" />
            <OfficeBadge letter="X" color="#107c41" />
         </AppIcon>
      ),
   },
   {
      name: "PowerPoint",
      icon: (
         <AppIcon>
            <path d="M31 3v27H4A27 27 0 0 1 31 3z" fill="#ed6c47" />
            <path d="M31 3a27 27 0 0 1 27 27H31z" fill="#ff8f6b" />
            <path d="M4 30h54a27 27 0 0 1-54 0z" fill="#d35230" />
            <OfficeBadge letter="P" color="#c43e1c" />
         </AppIcon>
      ),
   },
   {
      name: "Publisher",
      icon: (
         <AppIcon>
            <path d="M45 7h13v45H45z" fill="#038387" />
            <path d="M13 3h35v27H13z" fill="#37c6d0" />
            <path d="M13 30h35v14H13z" fill="#1a9ba1" />
            <path d="M13 43h35v14H13z" fill="#038387" />
            <OfficeBadge letter="P" color="#03787c" />
         </AppIcon>
      ),
   },
   {
      name: "AutoCAD",
      active: true,
      icon: (
         <AppIcon>
            <path d="M10 0v42L1 47V6z" fill="#ec5f8c" />
            <path d="M50 10h8v50h-8z" fill="#760728" />
            <path d="M10 0h43v42H10z" fill="#e51050" />
            <path d="M6 43h52v17H6z" fill="#760728" />
            <text x="32" y="33" textAnchor="middle" fill="#fff" className="font-['Roboto',sans-serif] font-bold text-[33px]">
               A
            </text>
            <text x="32" y="56" textAnchor="middle" fill="#fff" className="font-['Roboto',sans-serif] font-bold text-[13px]">
               CAD
            </text>
         </AppIcon>
      ),
   },
   {
      name: "Chrome",
      icon: (
         <AppIcon>
            <path d="M30 30L4 15a30 30 0 0 1 52 0z" fill="#e63b2e" />
            <path d="M30 15h26a30 30 0 0 1-26 45l13-22z" fill="#fdc52c" />
            <path d="M30 60A30 30 0 0 1 4 15l13 22 26 1z" fill="#279845" />
            <circle cx="30" cy="30" r="15" fill="#fff" />
            <circle cx="30" cy="30" r="12" fill="#327ef0" />
         </AppIcon>
      ),
   },
   {
      name: "3ds Max",
      icon: (
         <AppIcon>
            <path d="M10 0v42L1 47V6z" fill="#7fc6df" />
            <path d="M50 10h8v50h-8z" fill="#36687f" />
            <path d="M10 0h43v42H10z" fill="#38a5cd" />
            <path d="M6 43h52v17H6z" fill="#36687f" />
            <text x="32" y="33" textAnchor="middle" fill="#fff" className="font-['Roboto',sans-serif] font-bold text-[33px]">
               3
            </text>
            <text x="32" y="56" textAnchor="middle" fill="#fff" className="font-['Roboto',sans-serif] font-bold text-[13px]">
               MAX
            </text>
         </AppIcon>
      ),
   },
   {
      name: "Microsoft Store",
      icon: (
         <AppIcon>
            <defs>
               <linearGradient id="store" x1="0" y1="9" x2="40" y2="60" gradientUnits="userSpaceOnUse">
                  <stop offset="0" stopColor="#0a67b8" />
                  <stop offset="1" stopColor="#21375f" />
               </linearGradient>
            </defs>
            <path d="M1 9h58v43c0 4-3 7-7 7H8c-4 0-7-3-7-7z" fill="url(#store)" />
            <path d="M17 13V3h26v10" stroke="#1eb4f6" strokeWidth="4" />
            <path d="M19 23h10v10H19z" fill="#f25022" />
            <path d="M31 23h10v10H31z" fill="#7fba00" />
            <path d="M19 35h10v10H19z" fill="#00a4ef" />
            <path d="M31 35h10v10H31z" fill="#ffb900" />
         </AppIcon>
      ),
   },
];

function Taskbar() {
   return (
      <footer className="flex items-center bg-linear-to-r from-[#dcdddd] via-[#e6e6e6] to-[#dadbdb] pb-[3px] pl-[390px] border-[#b5b5b5] border-t-3 h-[120px] overflow-hidden">
         <button type="button" className="flex justify-center w-[110px] shrink-0" aria-label="Start">
            <svg className="w-[58px] h-[58px]" viewBox="0 0 58 58" aria-hidden="true">
               <defs>
                  <linearGradient id="win" x1="0" y1="0" x2="1" y2="1">
                     <stop offset="0" stopColor="#4cd0ff" />
                     <stop offset=".6" stopColor="#0f83dc" />
                     <stop offset="1" stopColor="#0074d2" />
                  </linearGradient>
               </defs>
               <path
                  d="M2 0h26v28H0V2a2 2 0 0 1 2-2zM30 0h26a2 2 0 0 1 2 2v26H30zM0 30h28v28H2a2 2 0 0 1-2-2zM30 30h28v26a2 2 0 0 1-2 2H30z"
                  fill="url(#win)"
               />
            </svg>
         </button>
         <label className="flex items-center gap-[26px] bg-[#f5f5f5] ml-2 px-[27px] border-2 border-[#cfcfcf] border-b-[#b9b9b9] rounded-full w-[548px] h-20 shrink-0">
            <svg className="w-9 h-[38px] shrink-0" viewBox="0 0 36 38" fill="none" aria-hidden="true">
               <circle cx="16" cy="16" r="14" stroke="#2a2a2a" strokeWidth="4" />
               <path d="M26 26l9 10" stroke="#2a2a2a" strokeWidth="5" />
            </svg>
            <input
               type="text"
               aria-label="Procurar"
               placeholder="Procurar"
               className="flex-1 bg-transparent outline-none min-w-0 text-[32px] placeholder:text-[#5d5d5d]"
            />
         </label>
         <div className="flex ml-1.5 shrink-0">
            {apps.map((app) => (
               <div key={app.name} className="flex justify-center w-[110px]">
                  <button
                     type="button"
                     aria-label={app.name}
                     className={
                        app.active
                           ? "relative flex justify-center items-center w-[94px] h-[100px] rounded-lg bg-[#f1f1f1] border-2 border-[#d6d6d6]"
                           : "relative flex justify-center items-center w-[94px] h-[100px]"
                     }
                  >
                     {app.icon}
                     {app.badge && (
                        <span className="top-2 right-1 absolute bg-[#0078d4] rounded-full w-10 h-10 text-[28px] text-white leading-10">
                           {app.badge}
                        </span>
                     )}
                     {app.running && <span className="bottom-1 absolute bg-[#858585] rounded-full w-4 h-2" />}
                     {app.active && <span className="bottom-0 absolute bg-[#0078d4] rounded-full w-10 h-2" />}
                  </button>
               </div>
            ))}
         </div>
         <div className="flex items-center ml-auto shrink-0">
            <button type="button" aria-label="Hidden icons">
               <svg className="w-7 h-4" viewBox="0 0 28 16" fill="none" aria-hidden="true">
                  <path d="M1 15L14 2l13 13" stroke="#1b1b1b" strokeWidth="3" />
               </svg>
            </button>
            <button type="button" className="ml-[46px]" aria-label="OneDrive">
               <svg className="w-10 h-10" viewBox="0 0 40 40" fill="none" aria-hidden="true">
                  <path d="M1 20C2 6 22-6 36 10M37 0v11H26M3 40V29h11M4 30c3 5 9 9 16 9" stroke="#111" strokeWidth="2.500" />
                  <circle cx="30" cy="30" r="10" fill="#ff9a00" />
               </svg>
            </button>
            <svg className="ml-10 w-1 h-10" viewBox="0 0 4 40" fill="none" aria-hidden="true">
               <path d="M4 12c-4 5-4 11 0 16M1 4l3 2" stroke="#111" strokeWidth="2.500" />
            </svg>
         </div>
      </footer>
   );
}

export default function App() {
   return (
      <div className="flex flex-col bg-[#222933] min-w-0 h-screen overflow-hidden font-['Open_Sans','Noto_Sans',sans-serif] text-[28px]">
         <TitleBar />
         <nav className="flex gap-[39px] border-[#3c4452] border-b h-[50px] overflow-hidden text-[#bfc1c5] leading-[50px] whitespace-nowrap">
            <span className="flex justify-end w-3.5 overflow-hidden">
               <button type="button">Format</button>
            </span>
            {menuItems.map((item) => (
               <button key={item} type="button">
                  {item}
               </button>
            ))}
         </nav>
         <div className="flex items-center pt-4 h-[60px] overflow-hidden text-[#bfc1c5] whitespace-nowrap shrink-0">
            <nav className="flex items-center gap-[53px]">
               <span className="flex justify-end w-[109px] overflow-hidden">
                  <button type="button">Parametric</button>
               </span>
               {ribbonTabs.map((tab) => (
                  <button key={tab} type="button">
                     {tab}
                  </button>
               ))}
            </nav>
            <button type="button" className="flex items-center gap-3.5 ml-[76px]" aria-label="Minimize ribbon">
               <svg className="w-9 h-[18px]" viewBox="0 0 36 18" aria-hidden="true">
                  <rect width="36" height="18" rx="2" fill="#f2f2f2" />
                  <path d="M18 5l6 7H12z" fill="#222933" />
               </svg>
               <Caret />
            </button>
         </div>
         <div className="shrink-0">
            <Ribbon />
            <FileTabs />
         </div>
         <Viewport />
         <div className="shrink-0">
            <CommandLine />
            <div className="flex items-start gap-[26px] pt-2.5 pl-[19px] border-[#3c4452] border-t-[10px] h-[85px]">
               <Slash />
               <button type="button" className="pt-[5px]" aria-label="New layout">
                  <Plus />
               </button>
               <Slash />
            </div>
            <div className="bg-[#3c4452] h-[59px] overflow-hidden text-white">
               <p className="flex justify-end w-[437px] overflow-hidden font-semibold leading-[64px] whitespace-nowrap">
                  Press ESC or ENTER to exit, or right-click to display shortcut-menu.
               </p>
            </div>
            <Taskbar />
         </div>
      </div>
   );
}
